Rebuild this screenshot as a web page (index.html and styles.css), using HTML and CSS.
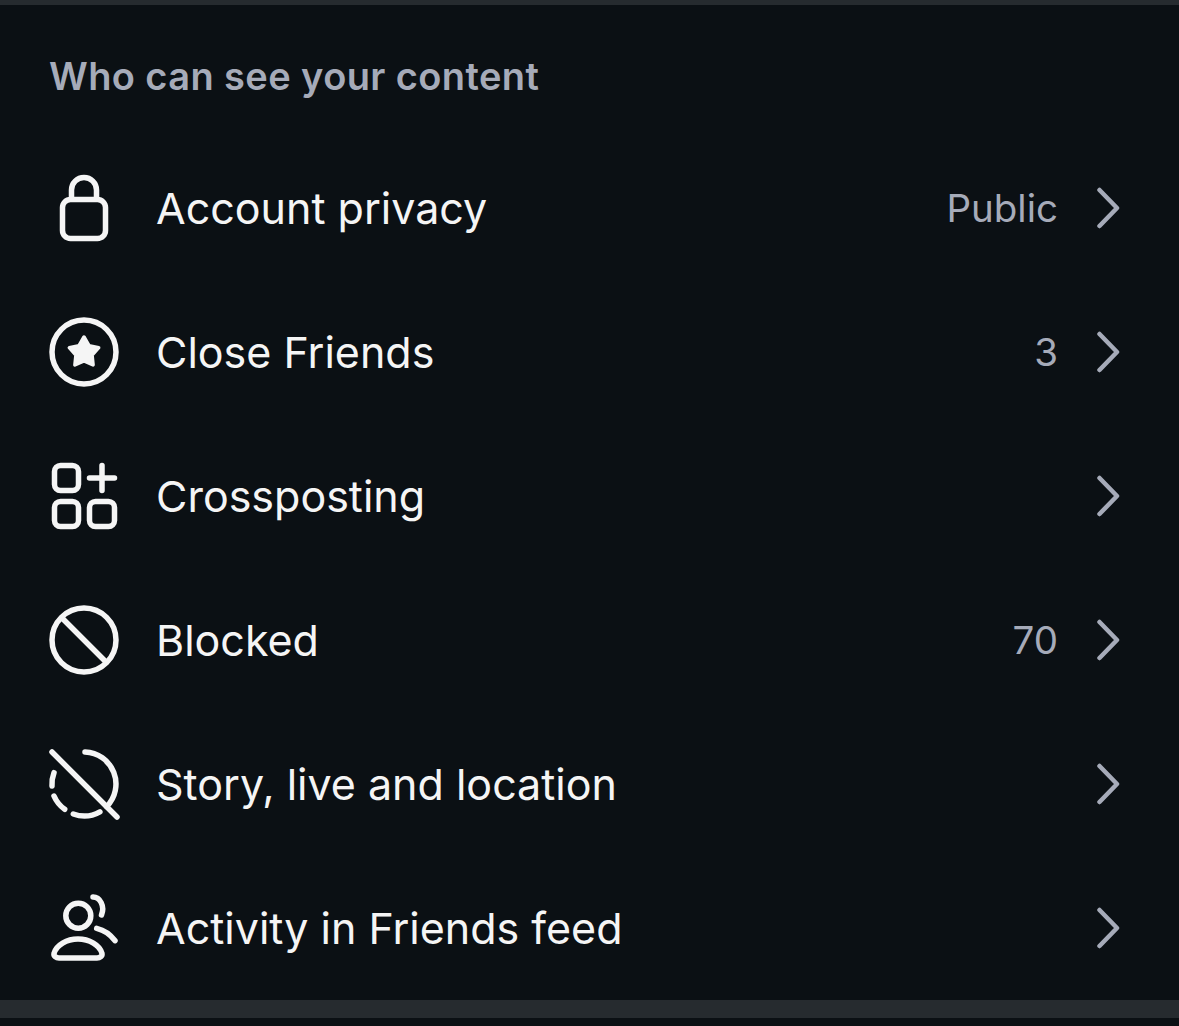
FILE: index.html
```html
<!DOCTYPE html>
<html lang="en">
<head>
    <meta charset="UTF-8">
    <meta name="viewport" content="width=device-width, initial-scale=1.0">
    <title>Who can see your content</title>
    <link rel="stylesheet" href="styles.css">
</head>
<body>

<div class="section">
    <h2 class="section-title">Who can see your content</h2>

    <div class="row">
        <svg class="row-icon" viewBox="0 0 72 72">
            <rect x="14.5" y="27.5" width="43" height="39" rx="8"/>
            <path d="M23.5 27V18a12.5 12.5 0 0 1 25 0V27"/>
        </svg>
        <span class="row-label">Account privacy</span>
        <span class="row-value">Public</span>
        <svg class="chevron" viewBox="0 0 24 44"><path d="M3.5 4L21 22L3.5 40"/></svg>
    </div>

    <div class="row">
        <svg class="row-icon" viewBox="0 0 72 72">
            <circle cx="36" cy="36" r="32"/>
            <path class="filled" d="M36 21L41 29.6L50.7 31.7L44.1 39.1L45.1 49L36 45L26.9 49L27.9 39.1L21.3 31.7L31 29.6Z"/>
        </svg>
        <span class="row-label">Close Friends</span>
        <span class="row-value">3</span>
        <svg class="chevron" viewBox="0 0 24 44"><path d="M3.5 4L21 22L3.5 40"/></svg>
    </div>

    <div class="row">
        <svg class="row-icon" viewBox="0 0 72 72">
            <rect x="6.5" y="5.5" width="24" height="25" rx="6"/>
            <rect x="6.5" y="41.5" width="24" height="25" rx="6"/>
            <rect x="41.5" y="41.5" width="25" height="25" rx="6"/>
            <path d="M41.5 18H66.5M54 5.5V30.5"/>
        </svg>
        <span class="row-label">Crossposting</span>
        <svg class="chevron" viewBox="0 0 24 44"><path d="M3.5 4L21 22L3.5 40"/></svg>
    </div>

    <div class="row">
        <svg class="row-icon" viewBox="0 0 72 72">
            <circle cx="36" cy="36" r="32"/>
            <path d="M14 14L58 58"/>
        </svg>
        <span class="row-label">Blocked</span>
        <span class="row-value">70</span>
        <svg class="chevron" viewBox="0 0 24 44"><path d="M3.5 4L21 22L3.5 40"/></svg>
    </div>

    <div class="row">
        <svg class="row-icon" viewBox="0 0 72 72">
            <path d="M4 4L69 69"/>
            <path d="M37 4A32 32 0 0 1 58.6 58.6"/>
            <path d="M25.3 66A32 32 0 0 0 51.9 63.8"/>
            <path d="M6 48A32 32 0 0 0 16.7 61.3"/>
            <path d="M6 24.7A32 32 0 0 0 4 38"/>
        </svg>
        <span class="row-label">Story, live and location</span>
        <svg class="chevron" viewBox="0 0 24 44"><path d="M3.5 4L21 22L3.5 40"/></svg>
    </div>

    <div class="row">
        <svg class="row-icon" viewBox="0 0 72 72">
            <circle cx="30.3" cy="23.7" r="12.5"/>
            <path d="M6 61.5C8 53 19 47 30 47C41 47 52 53 54 61.5C54.5 64 52 66 49 66H11C8 66 5.5 64 6 61.5Z"/>
            <path d="M45 5C52 5 57 14 53.5 23"/>
            <path d="M48.7 36.3Q60 39 67 48.7"/>
        </svg>
        <span class="row-label">Activity in Friends feed</span>
        <svg class="chevron" viewBox="0 0 24 44"><path d="M3.5 4L21 22L3.5 40"/></svg>
    </div>
</div>

<div class="divider"></div>

</body>
</html>
```

FILE: styles.css
```css
body {
    margin: 0;
    font-family: Inter, "Liberation Sans", sans-serif;
    background-color: #0b1014;
    color: #f5f5f5;
}

.section {
    border-top: 5px solid #262b2f;
}

.section-title {
    margin: 0;
    padding: 47px 0 0 49px;
    height: 131px;
    box-sizing: border-box;
    font-size: 38px;
    line-height: 48px;
    letter-spacing: 0.4px;
    font-weight: 600;
    color: #a6abb9;
}

.row {
    display: flex;
    align-items: center;
    height: 144px;
    padding: 0 59px 0 48px;
}

.row-icon {
    width: 72px;
    height: 72px;
    margin-right: 36px;
    flex-shrink: 0;
    fill: none;
    stroke: #f5f5f5;
    stroke-width: 5.5;
    stroke-linecap: round;
    stroke-linejoin: round;
}

.row-icon .filled {
    fill: #f5f5f5;
    stroke-width: 3.5;
}

.row-label {
    flex: 1;
    font-size: 43px;
    line-height: 56px;
}

.row-value {
    margin-right: 38px;
    font-size: 38.5px;
    line-height: 56px;
    color: #a6abb9;
}

.chevron {
    width: 24px;
    height: 44px;
    fill: none;
    stroke: #a6abb9;
    stroke-width: 4.5;
    stroke-linecap: round;
    stroke-linejoin: round;
}

.divider {
    height: 18px;
    background-color: #262b2f;
}
```
